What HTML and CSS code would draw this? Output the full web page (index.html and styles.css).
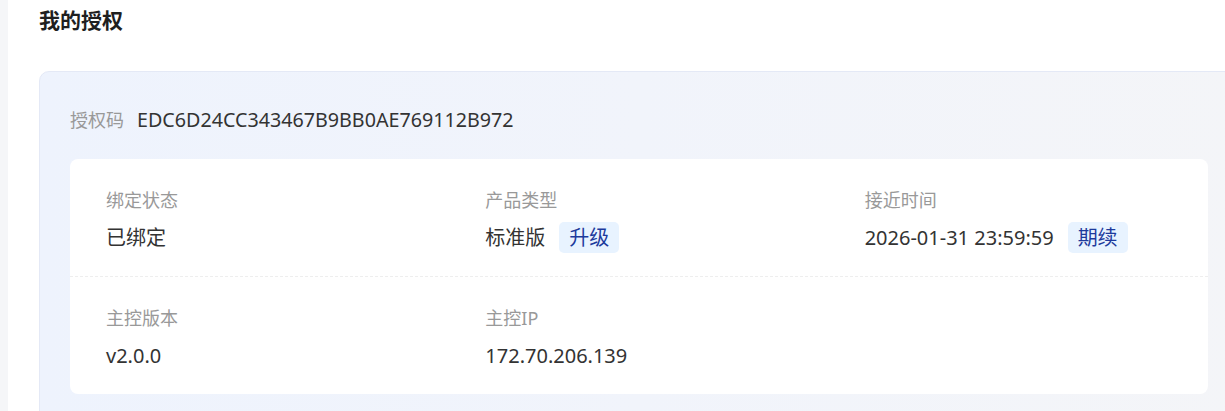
FILE: index.html
```html
<!DOCTYPE html>
<html lang="zh-CN">
<head>
    <meta charset="UTF-8">
    <meta name="viewport" content="width=device-width, initial-scale=1.0">
    <title>我的授权</title>
    <link rel="stylesheet" href="styles.css">
</head>
<body>
    <div class="page">
        <h1 class="page-title">我的授权</h1>
        <div class="license-card">
            <div class="license-code">
                <span class="code-label">授权码</span>
                <span class="code-value">EDC6D24CC343467B9BB0AE769112B972</span>
            </div>
            <div class="info-box">
                <div class="info-row">
                    <div class="info-item">
                        <div class="info-label">绑定状态</div>
                        <div class="info-value">已绑定</div>
                    </div>
                    <div class="info-item">
                        <div class="info-label">产品类型</div>
                        <div class="info-value">标准版 <span class="tag">升级</span></div>
                    </div>
                    <div class="info-item">
                        <div class="info-label">接近时间</div>
                        <div class="info-value">2026-01-31 23:59:59 <span class="tag">期续</span></div>
                    </div>
                </div>
                <div class="info-row">
                    <div class="info-item">
                        <div class="info-label">主控版本</div>
                        <div class="info-value">v2.0.0</div>
                    </div>
                    <div class="info-item">
                        <div class="info-label">主控IP</div>
                        <div class="info-value">172.70.206.139</div>
                    </div>
                    <div class="info-item"></div>
                </div>
            </div>
        </div>
    </div>
</body>
</html>
```

FILE: styles.css
```css
:root {
    --page-bg: #f5f6f8;
    --text-color: #333333;
    --label-color: #999999;
    --tag-bg: #e8f3ff;
    --tag-color: #1d3a9c;
}

html, body {
    margin: 0;
    padding: 0;
}

body {
    font-family: 'Noto Sans', 'Noto Sans CJK SC', sans-serif;
    background-color: var(--page-bg);
    color: var(--text-color);
    overflow: hidden;
    height: 411px;
}

.page {
    margin-left: 8px;
    width: 1262px;
    min-height: 411px;
    background-color: #ffffff;
    padding: 0 31px;
    box-sizing: border-box;
}

.page-title {
    margin: 0;
    padding-top: 6px;
    height: 71px;
    box-sizing: border-box;
    font-size: 21px;
    line-height: 28px;
    font-weight: 700;
    color: #1f1f1f;
}

.license-card {
    border: 1px solid #e4e9f6;
    border-radius: 10px;
    background: linear-gradient(90deg, #eef3fd 0%, #f1f4fb 50%, #f4f5f8 100%);
    padding: 33px 30px 30px;
}

.license-code {
    display: flex;
    align-items: center;
    height: 28px;
    margin-bottom: 26px;
}

.code-label {
    font-size: 18px;
    color: var(--label-color);
    margin-right: 13px;
}

.code-value {
    font-size: 19.7px;
    color: var(--text-color);
}

.info-box {
    background-color: #ffffff;
    border-radius: 8px;
}

.info-row {
    display: flex;
    padding: 28px 0 23px;
}

.info-row + .info-row {
    border-top: 1px dashed #eeeeee;
}

.info-item {
    flex: 1;
    padding-left: 36px;
}

.info-label {
    font-size: 18px;
    line-height: 26px;
    color: var(--label-color);
    margin-bottom: 9px;
}

.info-value {
    display: flex;
    align-items: center;
    font-size: 20px;
    line-height: 31px;
    height: 31px;
    color: var(--text-color);
}

.tag {
    display: inline-block;
    margin-left: 14px;
    padding: 0 10px;
    height: 31px;
    line-height: 31px;
    border-radius: 5px;
    background-color: var(--tag-bg);
    color: var(--tag-color);
    font-size: 20px;
}
```
